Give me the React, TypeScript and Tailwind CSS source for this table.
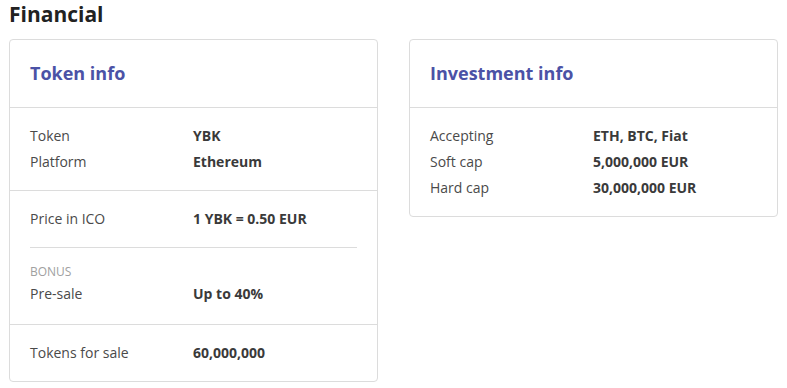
import React from "react";

const Row = ({ label, value }: { label: string; value: string }) => (
  <div className="grid grid-cols-[163px_1fr] leading-[26px] text-[14px]">
    <div className="text-[#4a4a4a]">{label}</div>
    <div className="font-bold text-[#3a3a3a]">{value}</div>
  </div>
);

const Header = ({ title }: { title: string }) => (
  <div className="h-[68px] flex items-center px-[20px] pb-[1px] border-b border-[#dcdcdc]">
    <h3 className="text-[18px] font-bold text-[#4b52a6] leading-none">{title}</h3>
  </div>
);

export default function App() {
  return (
    <div
      className="bg-white w-[787px] h-[388px] px-[9px]"
      style={{ fontFamily: '"Open Sans", sans-serif' }}
    >
      <h2 className="text-[21px] font-bold text-[#222] leading-[28px] mb-[11px]">Financial</h2>
      <div className="flex items-start gap-[31px]">
        <div className="w-[370px] border border-[#dcdcdc] rounded-[4px]">
          <Header title="Token info" />
          <div className="px-[20px] pt-[15px] pb-[15px] border-b border-[#dcdcdc]">
            <Row label="Token" value="YBK" />
            <Row label="Platform" value="Ethereum" />
          </div>
          <div className="px-[20px] pt-[15px] pb-[17px] border-b border-[#dcdcdc]">
            <Row label="Price in ICO" value="1 YBK = 0.50 EUR" />
            <div className="border-t border-[#dcdcdc] mt-[15px] mb-[15px]" />
            <div className="text-[12px] leading-[18px] text-[#a0a0a0]">BONUS</div>
            <Row label="Pre-sale" value="Up to 40%" />
          </div>
          <div className="px-[20px] pt-[15px] pb-[15px]">
            <Row label="Tokens for sale" value="60,000,000" />
          </div>
        </div>
        <div className="w-[370px] border border-[#dcdcdc] rounded-[4px]">
          <Header title="Investment info" />
          <div className="px-[20px] pt-[15px] pb-[15px]">
            <Row label="Accepting" value="ETH, BTC, Fiat" />
            <Row label="Soft cap" value="5,000,000 EUR" />
            <Row label="Hard cap" value="30,000,000 EUR" />
          </div>
        </div>
      </div>
    </div>
  );
}
